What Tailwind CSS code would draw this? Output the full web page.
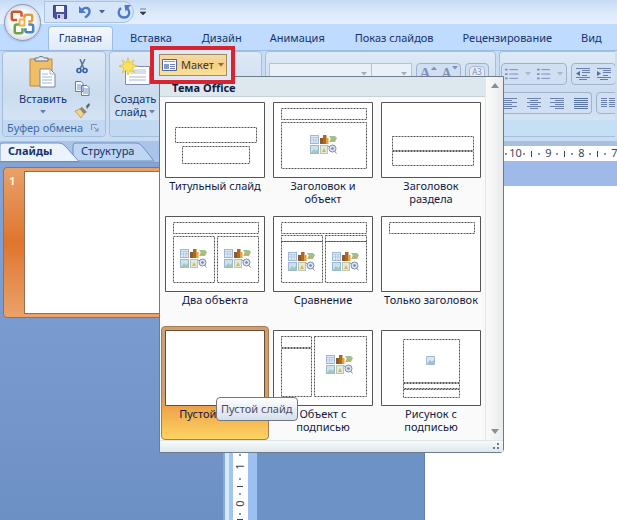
<!DOCTYPE html>
<html lang="ru">
<head>
<meta charset="utf-8">
<meta name="viewport" content="width=device-width, initial-scale=1">
<title>Макет слайда</title>
<script src="https://cdn.jsdelivr.net/npm/@tailwindcss/browser@4"></script>
</head>
<body class="relative flex h-screen flex-col overflow-hidden bg-[#bfdbff] font-['Noto_Sans','Open_Sans',sans-serif] text-[11px] text-[#15336b]">

<svg class="hidden" aria-hidden="true">
  <symbol id="content" viewBox="0 0 27 19">
    <rect x=".5" y=".5" width="8" height="8" fill="#dfeaf6" stroke="#9db8d6"/><path d="M1 2.500h7M3.500 2v6M6 2v6M1 5h7" stroke="#a9c3de" stroke-width=".7"/>
    <rect x="10" y="3" width="4" height="6" fill="#8a5a2a"/><rect x="13" y="0" width="3.500" height="9" fill="#b5651d"/><rect x="16" y="3" width="2.500" height="6" fill="#e0a23c"/>
    <path d="M19 1h6l2 2-2 4h-6l2-3z" fill="#9cc48d"/><path d="M20 5h5" stroke="#e39a5a"/>
    <rect x=".5" y="10.500" width="8" height="8" fill="#cfe0f2" stroke="#9db8d6"/><path d="M1 18l3-4 2 2 2-2v4z" fill="#9fcbb0"/>
    <rect x="10.500" y="10.500" width="7" height="8" fill="#e3ead9" stroke="#b8c9b0"/><path d="M12 17l2-4 2 4z" fill="#d6b36b"/>
    <circle cx="22.500" cy="13.500" r="3.500" fill="#dfe6ee" stroke="#7d8da5"/><circle cx="22.500" cy="13.500" r="1.200" fill="#6d7c95"/><path d="M24.500 16l2 2.500M19 12l-1-1.500" stroke="#7d8da5"/>
  </symbol>
  <symbol id="down" viewBox="0 0 6 4"><path d="M0 0h6L3 3.500z" fill="currentColor"/></symbol>
  <symbol id="bullets" viewBox="0 0 16 15"><path d="M0 2.500h3M0 7.500h3M0 12.500h3" stroke="#7e93b8" stroke-width="2"/><path d="M5 2.500h10M5 7.500h10M5 12.500h10" stroke="#7188b0"/></symbol>
</svg>

<header class="relative shrink-0">
  <div class="flex h-6 items-center bg-linear-to-b from-[#c6dcf4] via-[#dae9fa] to-[#e6f0fd] pl-11">
    <div class="flex h-[22px] w-[90px] items-center gap-3 rounded-r-full border border-[#a9c2e2] bg-[#d6e5f8] pl-2 text-[#4a5f8f]">
      <button aria-label="Сохранить"><svg class="size-3.5" viewBox="0 0 14 14"><path d="M.5.500h13v13H2l-1.500-1.500z" fill="#4a51a5" stroke="#393f88"/><path d="M3 1h8v6H3z" fill="#f1f3fd"/><path d="M4 9h7v5H4z" fill="#c9cee6"/><path d="M5 10h2v3H5z" fill="#393f88"/></svg></button>
      <button class="flex items-center gap-2" aria-label="Отменить"><svg class="h-3.5 w-3" viewBox="0 0 12 14"><path d="M0 1v7h7z" fill="#4b7bc8"/><path d="M3 5C5.500 1.500 10.500 2.500 10.500 6.500c0 3-2 4.500-4.500 6" fill="none" stroke="#4b7bc8" stroke-width="2.400"/></svg><svg class="h-1 w-1.5"><use href="#down"/></svg></button>
      <button aria-label="Повторить"><svg class="size-3.5" viewBox="0 0 14 14"><path d="M7.500 0H14L8.500 6.500z" fill="#4b7bc8"/><path d="M4 3C0 6 1.500 12.500 7 12.500S13.500 7 10.500 3.500" fill="none" stroke="#4b7bc8" stroke-width="2.300"/></svg></button>
    </div>
    <button class="ml-1.5" aria-label="Настройка панели"><svg class="h-2 w-1.5 text-[#333b4d]" viewBox="0 0 6 8"><path d="M0 1h6M0 4h6L3 7z" fill="currentColor" stroke="currentColor" stroke-width=".6"/></svg></button>
  </div>
  <nav class="flex h-[26px] items-end bg-[#bfdbff] pl-12">
    <button class="h-6 w-[65px] rounded-t border border-b-0 border-[#9fbde4] bg-linear-to-b from-[#f3f8fe] to-[#dfeaf8]">Главная</button>
    <button class="ml-[17px] h-6">Вставка</button>
    <button class="ml-[30px] h-6">Дизайн</button>
    <button class="ml-7 h-6">Анимация</button>
    <button class="ml-[30px] h-6 whitespace-nowrap">Показ слайдов</button>
    <button class="ml-[29px] h-6">Рецензирование</button>
    <button class="ml-[29px] h-6">Вид</button>
  </nav>
  <button class="absolute left-1 top-1 size-[37px] rounded-full border border-[#8899b5] bg-radial from-[#ffffff] from-40% to-[#b3c1d6] shadow" aria-label="Кнопка Office">
    <svg viewBox="0 0 36 36" fill="none" stroke-width="2.600"><path d="M12.500 15.500H9c-2 0-2-1-2-2V9c0-2 1-2 2-2h6c2 0 2 1 2 2v3" stroke="#d4532a"/><path d="M20 14v-2c0-2 1-2 2-2h4c2 0 2 1 2 2v3c0 2-1 2-2 2h-2" stroke="#e79a35"/><path d="M15 20h-3c-2 0-2 1-2 2v5c0 2 1 2 2 2h4c2 0 2-1 2-2v-3" stroke="#6da544"/><path d="M24 20h3c2 0 2 1 2 2v4c0 2-1 2-2 2h-4c-2 0-2-1-2-2v-2" stroke="#4388c9"/><path d="M15 15h5v6h-5z" stroke="#e8b34b" stroke-width="2"/></svg>
  </button>
</header>

<section class="flex h-[91px] shrink-0 gap-[3px] overflow-hidden border-t border-[#9bbbe3] bg-[#c9dcf2] px-0.5 pb-1" aria-label="Главная">
  <div class="flex w-[104px] shrink-0 flex-col rounded border border-[#a3bfde] bg-linear-to-b from-[#dee9f5] via-[#cbdcef] to-[#d9e8f7]">
    <div class="flex grow gap-1 pl-3">
      <button class="flex w-14 flex-col items-center pt-1">
        <svg class="h-8 w-8" viewBox="0 0 32 32"><path d="M3 3h22v27H3z" fill="#efbf68" stroke="#b98a3c"/><path d="M8 5V2h3c1-2 5-2 6 0h4v3z" fill="#e2e5ea" stroke="#697180"/><path d="M13 13h10l5 5v13H13z" fill="#fff" stroke="#7487a5"/><path d="M23 13v5h5M15 18h6M15 21h10M15 24h10M15 27h10" fill="none" stroke="#a3b5d3"/></svg>
        <span class="leading-[22px]">Вставить</span>
        <svg class="h-1 w-1.5 text-[#6680a8]"><use href="#down"/></svg>
      </button>
      <div class="flex flex-col gap-[7px] pt-[7px]">
        <button aria-label="Вырезать"><svg class="size-[15px]" viewBox="0 0 15 15" fill="none"><path d="M5 0l4 10M10 0L5 10" stroke="#5e7295" stroke-width="1.500"/><circle cx="4" cy="11.500" r="2" stroke="#345da5" stroke-width="1.600"/><circle cx="10" cy="11.500" r="2" stroke="#345da5" stroke-width="1.600"/></svg></button>
        <button aria-label="Копировать"><svg class="size-[15px]" viewBox="0 0 15 15" fill="#f5f9ff" stroke="#5d7fb5"><path d="M.5.500H6l2 2v8H.5zM6.500 4.500H12l2 2v8H6.500z"/><path d="M2 4h4M2 6h4M2 8h4M8 8h5M8 10h5M8 12h5" stroke-width=".8"/></svg></button>
        <button aria-label="Формат по образцу"><svg class="size-[15px]" viewBox="0 0 15 15"><path d="M11 3l3-3 1 2-3 4z" fill="#5b6370"/><path d="M7 4l5 5-3 2-5-5z" fill="#8d8778"/><path d="M0 8l5-2 4 5-3 4z" fill="#f2d488" stroke="#b7924a" stroke-width=".7"/></svg></button>
      </div>
    </div>
    <div class="flex h-4 items-center justify-between rounded-b bg-[#c2d9f1] pl-1 pr-1.5 text-[#3e6aaa]">
      <span class="whitespace-nowrap">Буфер обмена</span>
      <button aria-label="Параметры буфера"><svg class="size-2" viewBox="0 0 8 8" fill="none" stroke="#7590b8"><path d="M.5 6V.500H6M3 3l4 4M7 4v3H4"/></svg></button>
    </div>
  </div>

  <div class="flex w-[153px] shrink-0 flex-col rounded border border-[#a3bfde] bg-linear-to-b from-[#dee9f5] via-[#cbdcef] to-[#d9e8f7]">
    <div class="flex grow">
      <button class="flex w-[50px] shrink-0 flex-col items-center pt-1">
        <svg class="h-8 w-8 shrink-0" viewBox="0 0 32 32"><path d="M6.500 10.500h24v18h-24z" fill="#fdfdff" stroke="#7c8dad"/><path d="M11 13h16v5H11z" fill="#d6dfee"/><path d="M10 21h17M10 24h17" stroke="#a9b8d3"/><path d="M9 2l1.500 5L15 4l-2 4.500 6 1.500-6 2 3 4.500-5-2L9 19l-1.500-5L3 17l2-5-5-2 5-1.500L3 4l4.500 3z" fill="#f8e45a" stroke="#d8ba35" stroke-width=".7"/></svg>
        <span class="mt-1 leading-[13px] whitespace-nowrap">Создать<br>слайд <svg class="mb-0.5 inline h-1 w-1.5 text-[#6680a8]"><use href="#down"/></svg></span>
      </button>
    </div>
    <div class="h-4 rounded-b bg-[#c2d9f1]"></div>
  </div>

  <div class="flex w-[231px] shrink-0 flex-col rounded border border-[#a3bfde] bg-linear-to-b from-[#dee9f5] via-[#cbdcef] to-[#d9e8f7]">
    <div class="flex gap-1 pl-[3px] pt-[11px]">
      <div class="flex">
        <button class="flex h-[22px] w-[103px] items-center justify-end border border-[#b5c3d6] bg-[#eaf0f7] pr-1 text-[#a3adbd]" aria-label="Шрифт"><svg class="h-1 w-1.5"><use href="#down"/></svg></button>
        <button class="flex h-[22px] w-10 items-center justify-end border border-l-0 border-[#b5c3d6] bg-[#eaf0f7] pr-1 text-[#a3adbd]" aria-label="Размер шрифта"><svg class="h-1 w-1.5"><use href="#down"/></svg></button>
      </div>
      <div class="flex h-[22px] w-[45px] items-center justify-around rounded border border-[#9fb3d0] bg-[#d0dff2] font-['Liberation_Serif',serif] font-bold text-[#7f92b4]">
        <button class="flex text-base leading-5" aria-label="Увеличить шрифт">A<svg class="mt-0.5 h-1 w-1.5 rotate-180"><use href="#down"/></svg></button><button class="flex text-sm leading-5" aria-label="Уменьшить шрифт">A<svg class="mt-0.5 h-1 w-1.5"><use href="#down"/></svg></button>
      </div>
      <button class="flex h-[22px] w-6 justify-center rounded border border-[#9fb3d0] bg-[#d0dff2] pt-0.5 text-[8px] leading-[10px] text-[#7f92b4]"><span class="rounded-sm border border-[#a9b8d0] bg-[#e5ecf6] px-0.5">AЗ</span></button>
    </div>
  </div>

  <div class="flex min-w-0 grow flex-col overflow-hidden rounded-l border border-r-0 border-[#a3bfde] bg-linear-to-b from-[#dee9f5] via-[#cbdcef] to-[#d9e8f7]">
    <div class="flex shrink-0 gap-1 pl-px pt-[11px]">
      <div class="flex h-[22px] w-[66px] shrink-0 items-center justify-around rounded border border-[#9fb3d0] bg-[#d0dff2] text-[#a9b8d0]">
        <button class="flex items-center gap-1.5" aria-label="Маркеры"><svg class="h-3.5 w-3.5"><use href="#bullets"/></svg><svg class="h-1 w-1.5"><use href="#down"/></svg></button>
        <button class="flex items-center gap-1.5" aria-label="Нумерация"><svg class="h-3.5 w-3.5"><use href="#bullets"/></svg><svg class="h-1 w-1.5"><use href="#down"/></svg></button>
      </div>
      <div class="flex h-[22px] w-[45px] shrink-0 items-center justify-around rounded border border-[#9fb3d0] bg-[#d0dff2]">
        <button aria-label="Уменьшить отступ"><svg class="h-3.5 w-4" viewBox="0 0 16 14"><path d="M1 1.500h14M7 3.500h8M7 5.500h8M7 8.500h5M1 10.500h14M4 12.500h8" stroke="#6880ab"/><path d="M5 4v5L1 6.500z" fill="#526fa5"/></svg></button>
        <button aria-label="Увеличить отступ"><svg class="h-3.5 w-4" viewBox="0 0 16 14"><path d="M1 1.500h14M7 3.500h8M7 5.500h8M7 8.500h5M1 10.500h14M4 12.500h8" stroke="#6880ab"/><path d="M1 4v5l4-2.500z" fill="#526fa5"/></svg></button>
      </div>
    </div>
    <div class="mt-[7px] flex shrink-0 gap-1">
      <div class="flex h-[22px] w-[92px] shrink-0 items-center justify-between rounded-r border border-l-0 border-[#9fb3d0] bg-[#d0dff2] px-0.5">
        <button aria-label="По левому краю"><svg class="h-3 w-4" viewBox="0 0 16 12"><path d="M1 1.500h14M1 3.500h9M1 5.500h14M1 7.500h9M1 9.500h14M1 11.500h9" stroke="#6a82ad"/></svg></button>
        <button aria-label="По центру"><svg class="h-3 w-4" viewBox="0 0 16 12"><path d="M1 1.500h14M4 3.500h8M1 5.500h14M4 7.500h8M1 9.500h14M4 11.500h8" stroke="#6a82ad"/></svg></button>
        <button aria-label="По правому краю"><svg class="h-3 w-4" viewBox="0 0 16 12"><path d="M1 1.500h14M6 3.500h9M1 5.500h14M6 7.500h9M1 9.500h14M6 11.500h9" stroke="#6a82ad"/></svg></button>
        <button aria-label="По ширине"><svg class="h-3 w-4" viewBox="0 0 16 12"><path d="M1 1.500h14M1 3.500h14M1 5.500h14M1 7.500h14M1 9.500h14M1 11.500h14" stroke="#5a74a3"/></svg></button>
      </div>
      <button class="h-[22px] w-8 shrink-0 rounded border border-[#9fb3d0] bg-[#d0dff2] pl-1" aria-label="Колонки"><svg class="h-3 w-3.5" viewBox="0 0 14 12"><path d="M0 1.500h6M0 3.500h6M0 5.500h6M0 7.500h6M0 9.500h6M8 1.500h6M8 3.500h6M8 5.500h6M8 7.500h6M8 9.500h6" stroke="#6a82ad"/></svg></button>
    </div>
    <div class="mt-auto h-4 shrink-0 bg-[#c5e0f4]"></div>
  </div>
</section>

<main class="flex min-h-0 grow overflow-hidden">
  <aside class="flex w-[223px] shrink-0 flex-col bg-linear-to-b from-[#86a5d8] to-[#6d90c4]">
    <div class="relative flex h-[22px] shrink-0 border-b border-[#7f9fcb] bg-[#a9c4e8]">
      <svg class="absolute inset-0 h-[22px] w-40" viewBox="0 0 160 22"><path d="M73 20V5q0-3 3-3h60q4 0 7 4l11 14z" fill="#bed5f3" stroke="#6f91c4"/><path d="M0 20.500V4q0-2 3-2h56q4 0 7 4l13 14.500z" fill="#eaf3fe" stroke="#6f91c4"/></svg>
      <button class="relative w-[73px] pl-2 text-left font-bold">Слайды</button>
      <button class="relative ml-2">Структура</button>
    </div>
    <div class="mx-[3px] mt-1 flex h-[151px] shrink-0 rounded-sm border border-[#8f7652] bg-linear-to-b from-[#e8a069] via-[#df752d] via-50% to-[#eba268] p-[3px]">
      <span class="w-[17px] pl-0.5 pt-0.5 font-bold text-[#fff2cf]">1</span>
      <div class="grow border border-[#8f6f4d] bg-white"></div>
    </div>
  </aside>
  <div class="flex w-[10px] shrink-0 border-l-2 border-[#83a9dd] bg-[#a3c5f2]"><div class="w-1 bg-[#d8e9fd]"></div></div>

  <div class="flex min-w-0 grow flex-col border-t-5 border-[#a8bfdd]">
    <div class="flex h-[15px] shrink-0 items-center overflow-hidden bg-white pl-3.5 text-[#3b465a]">
      <!-- Horizontal ruler: number, dot, tick, dot -->
      <div class="flex w-[33px] shrink-0 items-center"><span class="flex w-[9px] justify-center">18</span><i class="mx-[3px] size-0.5 bg-[#8a94a6]"></i><i class="mx-[3px] h-1.5 w-px bg-[#3b465a]"></i><i class="mx-[3px] size-0.5 bg-[#8a94a6]"></i></div>
      <div class="flex w-[33px] shrink-0 items-center"><span class="flex w-[9px] justify-center">17</span><i class="mx-[3px] size-0.5 bg-[#8a94a6]"></i><i class="mx-[3px] h-1.5 w-px bg-[#3b465a]"></i><i class="mx-[3px] size-0.5 bg-[#8a94a6]"></i></div>
      <div class="flex w-[33px] shrink-0 items-center"><span class="flex w-[9px] justify-center">16</span><i class="mx-[3px] size-0.5 bg-[#8a94a6]"></i><i class="mx-[3px] h-1.5 w-px bg-[#3b465a]"></i><i class="mx-[3px] size-0.5 bg-[#8a94a6]"></i></div>
      <div class="flex w-[33px] shrink-0 items-center"><span class="flex w-[9px] justify-center">15</span><i class="mx-[3px] size-0.5 bg-[#8a94a6]"></i><i class="mx-[3px] h-1.5 w-px bg-[#3b465a]"></i><i class="mx-[3px] size-0.5 bg-[#8a94a6]"></i></div>
      <div class="flex w-[33px] shrink-0 items-center"><span class="flex w-[9px] justify-center">14</span><i class="mx-[3px] size-0.5 bg-[#8a94a6]"></i><i class="mx-[3px] h-1.5 w-px bg-[#3b465a]"></i><i class="mx-[3px] size-0.5 bg-[#8a94a6]"></i></div>
      <div class="flex w-[33px] shrink-0 items-center"><span class="flex w-[9px] justify-center">13</span><i class="mx-[3px] size-0.5 bg-[#8a94a6]"></i><i class="mx-[3px] h-1.5 w-px bg-[#3b465a]"></i><i class="mx-[3px] size-0.5 bg-[#8a94a6]"></i></div>
      <div class="flex w-[33px] shrink-0 items-center"><span class="flex w-[9px] justify-center">12</span><i class="mx-[3px] size-0.5 bg-[#8a94a6]"></i><i class="mx-[3px] h-1.5 w-px bg-[#3b465a]"></i><i class="mx-[3px] size-0.5 bg-[#8a94a6]"></i></div>
      <div class="flex w-[33px] shrink-0 items-center"><span class="flex w-[9px] justify-center">11</span><i class="mx-[3px] size-0.5 bg-[#8a94a6]"></i><i class="mx-[3px] h-1.5 w-px bg-[#3b465a]"></i><i class="mx-[3px] size-0.5 bg-[#8a94a6]"></i></div>
      <div class="flex w-[33px] shrink-0 items-center"><span class="flex w-[9px] justify-center">10</span><i class="mx-[3px] size-0.5 bg-[#8a94a6]"></i><i class="mx-[3px] h-1.5 w-px bg-[#3b465a]"></i><i class="mx-[3px] size-0.5 bg-[#8a94a6]"></i></div>
      <div class="flex w-[33px] shrink-0 items-center"><span class="flex w-[9px] justify-center">9</span><i class="mx-[3px] size-0.5 bg-[#8a94a6]"></i><i class="mx-[3px] h-1.5 w-px bg-[#3b465a]"></i><i class="mx-[3px] size-0.5 bg-[#8a94a6]"></i></div>
      <div class="flex w-[33px] shrink-0 items-center"><span class="flex w-[9px] justify-center">8</span><i class="mx-[3px] size-0.5 bg-[#8a94a6]"></i><i class="mx-[3px] h-1.5 w-px bg-[#3b465a]"></i><i class="mx-[3px] size-0.5 bg-[#8a94a6]"></i></div>
      <div class="flex w-[33px] shrink-0 items-center"><span class="flex w-[9px] justify-center">7</span></div>
    </div>
    <div class="flex min-h-0 grow">
      <div class="flex w-[15px] shrink-0 flex-col items-center justify-end overflow-hidden bg-white text-[#3b465a]">
        <!-- Vertical ruler: dot, number, dot, tick -->
        <div class="flex h-[33px] shrink-0 flex-col items-center justify-between"><i class="size-0.5 bg-[#8a94a6]"></i><span class="flex h-[9px] -rotate-90 items-center">1</span><i class="size-0.5 bg-[#8a94a6]"></i><i class="h-px w-1.5 bg-[#3b465a]"></i></div>
        <div class="flex h-[33px] shrink-0 flex-col items-center justify-between pt-1.5"><i class="size-0.5 bg-[#8a94a6]"></i><span class="flex h-[9px] -rotate-90 items-center">0</span><i class="size-0.5 bg-[#8a94a6]"></i><i class="h-px w-1.5 bg-[#3b465a]"></i></div>
      </div>
      <div class="w-[9px] shrink-0 bg-[#9cc0f0]"></div>
      <div class="flex min-w-0 grow flex-col bg-linear-to-b from-[#9fb9e8] to-[#6d92c5] to-60%">
        <div class="h-[25px] shrink-0 bg-[#9fb9e8]"></div>
        <div class="ml-[167px] grow border-l border-[#5f7fae] bg-white"></div>
      </div>
    </div>
  </div>
</main>

<!-- Layout gallery opened below the "Макет" button -->
<div class="absolute left-[159px] top-[76px] flex w-[345px] flex-col rounded-br-sm border border-[#6f7b8b] bg-[#fafafa] text-[#111a3e]">
  <div class="flex">
    <div class="grow">
      <h2 class="h-5 border-b border-[#c5d0d8] bg-[#dde7ee] pl-3 font-bold leading-[22px]">Тема Office</h2>
      <div class="grid grid-cols-3 pl-px pt-px text-center leading-[13px]">
        <button class="flex h-[114px] flex-col items-center p-1"><svg class="mb-px h-[76px] w-[100px] shrink-0" viewBox="0 0 100 76" fill="#fff" stroke="#555"><path d="M.5.500h99v75H.5z"/><path stroke-dasharray="2 1" d="M10.500 25.500h81v15h-81zM17.500 44.500h67v17h-67z"/></svg><span class="whitespace-nowrap">Титульный слайд</span></button>
        <button class="flex h-[114px] flex-col items-center p-1"><svg class="mb-px h-[76px] w-[100px] shrink-0" viewBox="0 0 100 76" fill="#fff" stroke="#555"><path d="M.5.500h99v75H.5z"/><path stroke-dasharray="2 1" d="M8.500 6.500h85v11h-85zM8.500 20.500h85v46h-85z"/><use href="#content" x="37" y="33" width="27" height="19" stroke="none"/></svg><span>Заголовок и<br>объект</span></button>
        <button class="flex h-[114px] flex-col items-center p-1"><svg class="mb-px h-[76px] w-[100px] shrink-0" viewBox="0 0 100 76" fill="#fff" stroke="#555"><path d="M.5.500h99v75H.5z"/><path stroke-dasharray="2 1" d="M11.500 34.500h81v14h-81zM11.500 49.500h81v14h-81z"/></svg><span>Заголовок<br>раздела</span></button>

        <button class="flex h-[114px] flex-col items-center p-1"><svg class="mb-px h-[76px] w-[100px] shrink-0" viewBox="0 0 100 76" fill="#fff" stroke="#555"><path d="M.5.500h99v75H.5z"/><path stroke-dasharray="2 1" d="M8.500 6.500h85v11h-85zM8.500 20.500h41v46h-41zM52.500 20.500h41v46h-41z"/><use href="#content" x="15" y="33" width="27" height="19" stroke="none"/><use href="#content" x="59" y="33" width="27" height="19" stroke="none"/></svg><span>Два объекта</span></button>
        <button class="flex h-[114px] flex-col items-center p-1"><svg class="mb-px h-[76px] w-[100px] shrink-0" viewBox="0 0 100 76" fill="#fff" stroke="#555"><path d="M.5.500h99v75H.5z"/><path stroke-dasharray="2 1" d="M8.500 6.500h85v11h-85zM8.500 19.500h41v6h-41zM52.500 19.500h41v6h-41zM8.500 25.500h41v41h-41zM52.500 25.500h41v41h-41z"/><use href="#content" x="15" y="36" width="27" height="19" stroke="none"/><use href="#content" x="59" y="36" width="27" height="19" stroke="none"/></svg><span>Сравнение</span></button>
        <button class="flex h-[114px] flex-col items-center p-1"><svg class="mb-px h-[76px] w-[100px] shrink-0" viewBox="0 0 100 76" fill="#fff" stroke="#555"><path d="M.5.500h99v75H.5z"/><path stroke-dasharray="2 1" d="M8.500 6.500h85v11h-85z"/></svg><span class="whitespace-nowrap">Только заголовок</span></button>

        <button class="flex h-[114px] flex-col items-center rounded-sm border border-[#a87b4e] bg-linear-to-b from-[#c9a078] from-60% via-[#eda04a] via-70% to-[#fdd561] p-[3px]"><svg class="mb-px h-[76px] w-[100px] shrink-0" viewBox="0 0 100 76" fill="#fff" stroke="#6d4a2b"><path d="M.5.500h99v75H.5z"/></svg><span class="whitespace-nowrap">Пустой слайд</span></button>
        <button class="flex h-[114px] flex-col items-center p-1"><svg class="mb-px h-[76px] w-[100px] shrink-0" viewBox="0 0 100 76" fill="#fff" stroke="#555"><path d="M.5.500h99v75H.5z"/><path stroke-dasharray="2 1" d="M8.500 6.500h30v11h-30zM8.500 18.500h30v48h-30zM41.500 6.500h52v60h-52z"/><use href="#content" x="53" y="25" width="27" height="19" stroke="none"/></svg><span>Объект с<br>подписью</span></button>
        <button class="flex h-[114px] flex-col items-center p-1"><svg class="mb-px h-[76px] w-[100px] shrink-0" viewBox="0 0 100 76" fill="#fff" stroke="#555"><path d="M.5.500h99v75H.5z"/><path stroke-dasharray="2 1" d="M22.500 9.500h56v43h-56zM22.500 53.500h56v5h-56zM22.500 59.500h56v8h-56z"/><path d="M45.500 26.500h8v8h-8z" fill="#d6e5f1" stroke="#a5bdd4"/><path d="M46 34l3-4 2 2 2-2v4z" fill="#9fc0c8" stroke="none"/></svg><span>Рисунок с<br>подписью</span></button>
      </div>
    </div>
    <div class="flex w-[18px] shrink-0 flex-col items-center justify-between border-l border-[#e2e6e9] bg-linear-to-r from-[#fafafa] to-[#e9ebec] py-1.5 text-[#8a8d92]">
      <button aria-label="Вверх"><svg class="block h-[5px] w-2" viewBox="0 0 8 5"><path d="M0 5h8L4 0z" fill="currentColor"/></svg></button>
      <button aria-label="Вниз"><svg class="block h-[5px] w-2" viewBox="0 0 8 5"><path d="M0 0h8L4 5z" fill="currentColor"/></svg></button>
    </div>
  </div>
  <div class="flex h-3 items-center justify-end border-t border-[#dfe6ea] bg-linear-to-b from-[#f6fafb] to-[#dde8ec] pr-1">
    <svg class="size-[7px]" viewBox="0 0 7 7" fill="#6f7b8b"><path d="M5 0h2v2H5zM5 4h2v2H5zM1 4h2v2H1z"/></svg>
  </div>
</div>

<div class="absolute left-[150px] top-[46px] border-4 border-[#d9232e] bg-[#dfe9f6] p-1 pl-[5px]">
  <button class="flex h-[22px] w-[68px] items-center gap-1 whitespace-nowrap border border-[#a58a5c] bg-linear-to-b from-[#f3d9ac] via-[#f7cf85] to-[#fbe39a] pl-0.5 text-[#3c3838]">
    <svg class="h-3 w-[15px] shrink-0" viewBox="0 0 15 12"><path d="M.5.500h14v11H.5z" fill="#f6f8fc" stroke="#56648a"/><path d="M2 2.500h11" stroke="#8aa0c8"/><path d="M2 5h5v5H2z" fill="#7f9ccc"/><path d="M8 5.500h5M8 7.500h5M8 9.500h5" stroke="#6e83b0"/></svg>
    Макет<svg class="h-1 w-1.5 shrink-0 text-[#8c6b3c]"><use href="#down"/></svg>
  </button>
</div>

<div role="tooltip" class="absolute left-[216px] top-[397px] rounded-sm border border-[#767676] bg-linear-to-b from-white to-[#d3dfef] px-1 py-px leading-[20px] whitespace-nowrap text-[#4c4c5c]">Пустой слайд</div>
</body>
</html>
